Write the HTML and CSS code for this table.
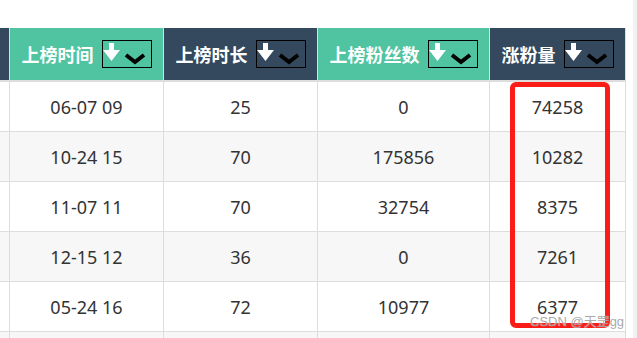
FILE: index.html
```html
<!DOCTYPE html>
<html lang="zh-CN">
<head>
    <meta charset="UTF-8">
    <title>榜单</title>
    <link rel="stylesheet" href="styles.css">
</head>
<body>
    <div class="page">
        <div class="table">
            <div class="row head">
                <div class="cell"></div>
                <div class="cell"><span>上榜时间</span><span class="sort"><svg width="48" height="26"><path d="M6 2H11V9H17L8.5 20L0 9H6Z" fill="#fff"/><polyline points="23,14 32,21 41,14" fill="none" stroke="#000" stroke-width="4"/></svg></span></div>
                <div class="cell"><span>上榜时长</span><span class="sort"><svg width="48" height="26"><path d="M6 2H11V9H17L8.5 20L0 9H6Z" fill="#fff"/><polyline points="23,14 32,21 41,14" fill="none" stroke="#000" stroke-width="4"/></svg></span></div>
                <div class="cell"><span>上榜粉丝数</span><span class="sort"><svg width="48" height="26"><path d="M6 2H11V9H17L8.5 20L0 9H6Z" fill="#fff"/><polyline points="23,14 32,21 41,14" fill="none" stroke="#000" stroke-width="4"/></svg></span></div>
                <div class="cell"><span>涨粉量</span><span class="sort"><svg width="48" height="26"><path d="M6 2H11V9H17L8.5 20L0 9H6Z" fill="#fff"/><polyline points="23,14 32,21 41,14" fill="none" stroke="#000" stroke-width="4"/></svg></span></div>
            </div>
            <div class="row">
                <div class="cell"></div><div class="cell">06-07 09</div><div class="cell">25</div><div class="cell">0</div><div class="cell">74258</div>
            </div>
            <div class="row">
                <div class="cell"></div><div class="cell">10-24 15</div><div class="cell">70</div><div class="cell">175856</div><div class="cell">10282</div>
            </div>
            <div class="row">
                <div class="cell"></div><div class="cell">11-07 11</div><div class="cell">70</div><div class="cell">32754</div><div class="cell">8375</div>
            </div>
            <div class="row">
                <div class="cell"></div><div class="cell">12-15 12</div><div class="cell">36</div><div class="cell">0</div><div class="cell">7261</div>
            </div>
            <div class="row">
                <div class="cell"></div><div class="cell">05-24 16</div><div class="cell">72</div><div class="cell">10977</div><div class="cell">6377</div>
            </div>
            <div class="row">
                <div class="cell"></div><div class="cell"></div><div class="cell"></div><div class="cell"></div><div class="cell"></div>
            </div>
        </div>
        <div class="scrollbar"></div>
        <div class="highlight"></div>
        <div class="watermark">CSDN @天罡gg</div>
    </div>
</body>
</html>
```

FILE: styles.css
```css
body {
    margin: 0;
    background: #fff;
    font-family: "Noto Sans", "Noto Sans CJK SC", sans-serif;
    color: #333;
    overflow: hidden;
}
.page {
    position: relative;
    display: flex;
    height: 338px;
    padding-top: 28px;
    box-sizing: border-box;
    overflow: hidden;
}
.table {
    width: 626px;
    flex-shrink: 0;
}
.row {
    display: grid;
    grid-template-columns: 9px 153px 153px 171px 135px;
    column-gap: 1px;
    background: #ddd;
    border-right: 1px solid #ddd;
    border-bottom: 1px solid #ddd;
}
.cell {
    display: flex;
    align-items: center;
    justify-content: center;
    height: 49px;
    background: #fff;
    font-size: 18px;
}
.row:nth-child(odd) .cell {
    background: #f7f7f7;
}
.head {
    border-bottom: 2px solid #ddd;
    border-right: none;
}
.head .cell {
    height: 52px;
    gap: 8px;
    color: #fff;
    font-family: "Noto Sans CJK SC", sans-serif;
    font-weight: bold;
    font-size: 18px;
}
.head .cell:nth-child(odd) {
    background: #34495e;
}
.head .cell:nth-child(even) {
    background: #50c3a0;
}
.sort {
    display: flex;
    width: 48px;
    height: 26px;
    border: 1px solid #000;
}
.scrollbar {
    margin-left: auto;
    margin-top: -28px;
    width: 4px;
    background: #f1f1f1;
}
.highlight {
    position: absolute;
    left: 510px;
    top: 82px;
    width: 100px;
    height: 246px;
    box-sizing: border-box;
    border: 5px solid #fa1c16;
    border-radius: 6px;
}
.watermark {
    position: absolute;
    left: 530px;
    top: 314px;
    line-height: 15px;
    font-family: "Liberation Sans", "Noto Sans CJK SC", sans-serif;
    font-size: 13px;
    color: rgba(130, 130, 130, 0.7);
    text-shadow: 0 0 1px #fff;
}
```
